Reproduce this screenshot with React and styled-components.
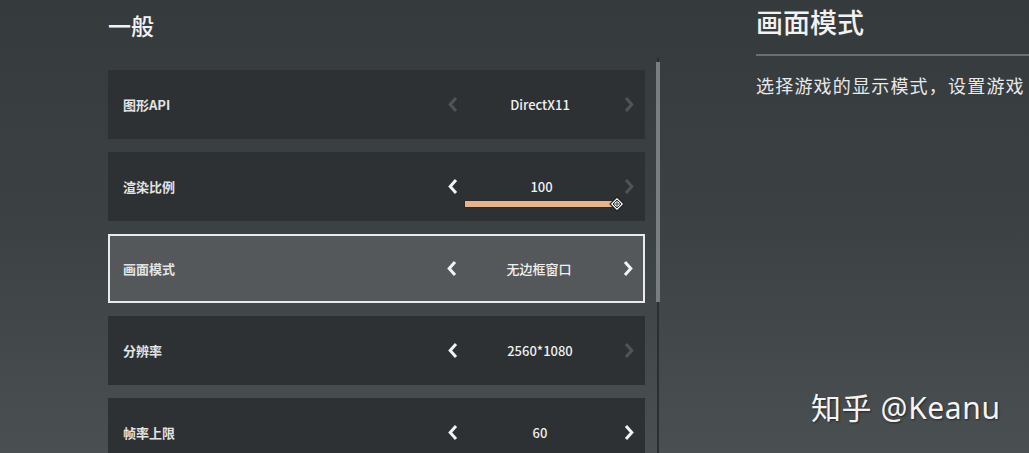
import React from "react";
import styled, { createGlobalStyle } from "styled-components";

const Global = createGlobalStyle`
  html, body { margin: 0; padding: 0; }
  body {
    width: 1029px;
    height: 453px;
    overflow: hidden;
    font-family: "Noto Sans", "Noto Sans CJK SC", sans-serif;
  }
`;

const Page = styled.div`
  position: relative;
  width: 1029px;
  height: 453px;
  overflow: hidden;
  display: flex;
  padding-left: 108px;
  box-sizing: border-box;
  background: linear-gradient(180deg, #353a3d 0%, #3c4144 50%, #4a4f52 100%);
`;

const LeftColumn = styled.section`
  width: 537px;
  flex: none;
  display: flex;
  flex-direction: column;
`;

const Title = styled.h1`
  margin: 0;
  padding-top: ${(p) => p.$top}px;
  font-family: "Noto Sans CJK SC", sans-serif;
  font-weight: 500;
  font-size: ${(p) => p.$size}px;
  line-height: 34px;
  color: #f2f2f2;
  white-space: nowrap;
`;

const Divider = styled.div`
  height: 2px;
  margin-top: ${(p) => p.$mt}px;
  background: #6a6f73;
`;

const List = styled.div`
  display: flex;
  flex-direction: column;
  gap: 13px;
  margin-top: 13px;
`;

const Row = styled.div`
  height: 69px;
  box-sizing: border-box;
  display: flex;
  align-items: stretch;
  justify-content: space-between;
  padding-right: 1px;
  background: ${(p) => (p.$selected ? "#54585b" : "#2d3134")};
  border: ${(p) => (p.$selected ? "2px solid #e9eaea" : "none")};
  padding-left: ${(p) => (p.$selected ? 13 : 15)}px;
  flex: none;
`;

const Label = styled.div`
  display: flex;
  align-items: center;
  font-family: "Noto Sans CJK SC", sans-serif;
  font-weight: 700;
  font-size: 13px;
  color: #e2e3e3;
`;

const Control = styled.div`
  display: grid;
  grid-template-columns: 27px 148px 30px;
  align-items: center;
  margin-right: ${(p) => (p.$selected ? -1 : 0)}px;
`;

const Arrow = styled.span`
  display: flex;
  justify-content: center;
  align-items: center;
  color: ${(p) => (p.$on ? "#f2f2f2" : "#4f5458")};
`;

const ValueCell = styled.div`
  align-self: stretch;
  display: grid;
  grid-template-rows: 1fr auto 1fr;
  justify-items: center;
`;

const Value = styled.div`
  grid-row: 2;
  font-family: "Noto Sans CJK SC", sans-serif;
  font-weight: 500;
  font-size: 13px;
  line-height: 20px;
  color: #f0f0f0;
  white-space: nowrap;
`;

const Track = styled.div`
  grid-row: 3;
  align-self: start;
  justify-self: start;
  position: relative;
  margin-top: 4px;
  margin-left: -1px;
  width: 152px;
  height: 6px;
  background: #e8b38c;
  box-shadow: 0 0 0 1px rgba(40, 30, 25, 0.35);
`;

const Knob = styled.svg`
  position: absolute;
  right: -8px;
  top: -5px;
`;

const ScrollArea = styled.div`
  flex: none;
  margin-left: 11px;
  width: 4px;
  padding-top: 57px;
  display: flex;
  flex-direction: column;
  align-items: center;
`;

const ScrollTrack = styled.div`
  flex: 1;
  width: 2px;
  background: #2b2f32;
  display: flex;
  flex-direction: column;
  align-items: center;
  padding-top: 5px;
`;

const Thumb = styled.div`
  width: 4px;
  height: 240px;
  background: #7a7e82;
  flex: none;
`;

const RightPanel = styled.section`
  flex: none;
  width: 274px;
  margin-left: 96px;
  display: flex;
  flex-direction: column;
  overflow: hidden;
`;

const Description = styled.p`
  margin: 17px 0 0;
  font-family: "Noto Sans CJK SC", sans-serif;
  font-size: 18px;
  letter-spacing: 1.2px;
  line-height: 24px;
  color: #e9e9e9;
  white-space: nowrap;
`;

const Watermark = styled.div`
  position: absolute;
  left: 811px;
  top: 388px;
  font-family: "Noto Sans", "Noto Sans CJK SC", sans-serif;
  font-size: 30px;
  letter-spacing: 0.6px;
  line-height: 40px;
  color: #f4f4f4;
  text-shadow: 1px 1px 2px rgba(0, 0, 0, 0.5);
  white-space: nowrap;
`;

const Chevron = ({ dir }) => (
  <svg width="12" height="17" viewBox="0 0 12 17">
    <path
      d={dir === "left" ? "M9 2 L3.2 8.5 L9 15" : "M3 2 L8.8 8.5 L3 15"}
      fill="none"
      stroke="currentColor"
      strokeWidth="3"
      strokeLinejoin="miter"
    />
  </svg>
);

const rows = [
  { label: "图形API", value: "DirectX11", left: false, right: false },
  { label: "渲染比例", value: "100", left: true, right: false, slider: true },
  { label: "画面模式", value: "无边框窗口", left: true, right: true, selected: true },
  { label: "分辨率", value: "2560*1080", left: true, right: false },
  { label: "帧率上限", value: "60", left: true, right: true },
];

export default function App() {
  return (
    <>
      <Global />
      <Page>
        <LeftColumn>
          <Title $size={23} $top={8}>一般</Title>
          <Divider $mt={15} />
          <List>
            {rows.map((r) => (
              <Row key={r.label} $selected={r.selected}>
                <Label>{r.label}</Label>
                <Control $selected={r.selected}>
                  <Arrow $on={r.left}>
                    <Chevron dir="left" />
                  </Arrow>
                  <ValueCell>
                    <Value>{r.value}</Value>
                    {r.slider && (
                      <Track>
                        <Knob width="16" height="16" viewBox="0 0 16 16">
                          <path d="M8 1 L15 8 L8 15 L1 8 Z" fill="#f4f4f4" stroke="#222" strokeWidth="1.2" />
                          <path d="M8 4 L12 8 L8 12 L4 8 Z" fill="none" stroke="#333" strokeWidth="1" />
                          <path d="M8 4 V12 M4 8 H12" stroke="#333" strokeWidth="0.9" />
                        </Knob>
                      </Track>
                    )}
                  </ValueCell>
                  <Arrow $on={r.right}>
                    <Chevron dir="right" />
                  </Arrow>
                </Control>
              </Row>
            ))}
          </List>
        </LeftColumn>
        <ScrollArea>
          <ScrollTrack>
            <Thumb />
          </ScrollTrack>
        </ScrollArea>
        <RightPanel>
          <Title $size={27} $top={5}>画面模式</Title>
          <Divider $mt={15} />
          <Description>选择游戏的显示模式，设置游戏</Description>
        </RightPanel>
        <Watermark>知乎 @Keanu</Watermark>
      </Page>
    </>
  );
}
